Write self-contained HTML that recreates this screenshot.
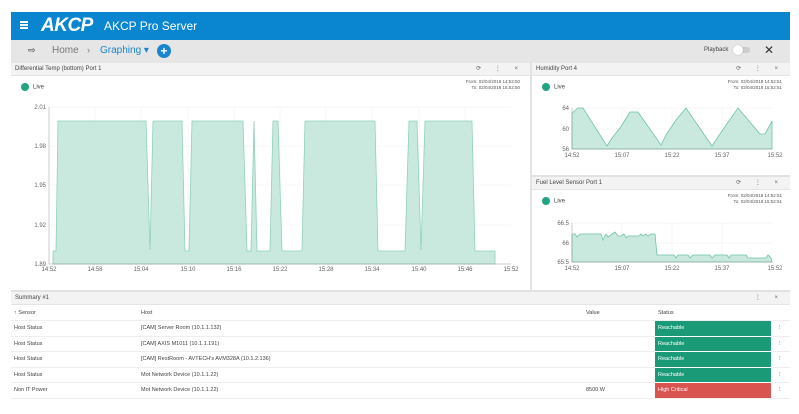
<!DOCTYPE html>
<html><head><meta charset="utf-8"><style>
*{box-sizing:border-box;margin:0;padding:0}
body{width:799px;height:414px;background:#fff;font-family:"Liberation Sans",sans-serif;position:relative;overflow:hidden;color:#333}
.abs{position:absolute}
.top{left:11px;top:12px;width:779px;height:28px;background:#0a86d0;color:#fff}
.tb{left:11px;top:40px;width:779px;height:23px;background:#e6e6e6}
.area{left:11px;top:63px;width:779px;height:345px;background:#e2e2e2}
.pan{position:absolute;background:#fff}
.ph{height:13px;background:#f3f3f3;border-bottom:1px solid #e4e4e4;font-size:6px;line-height:13px;padding-left:4px;color:#444;position:relative}
.ph .ic{position:absolute;right:6px;top:0;font-size:6px;color:#666;letter-spacing:6px}
.live{position:absolute;font-size:6px;color:#444}
.live i{display:inline-block;width:8px;height:8px;border-radius:50%;background:#1fa57f;vertical-align:middle;margin-right:4px}
.ft{position:absolute;font-size:4.5px;color:#555;text-align:right;line-height:6px}
svg text{font-family:"Liberation Sans",sans-serif;fill:#666}
table{border-collapse:collapse;width:100%;font-size:5.5px;color:#444}
td{height:15.5px;padding-left:3px;border-bottom:1px solid #eee}
.g{background:#1b9a78;color:#fff;border-bottom:1px solid #fff}
.r{background:#d9534f;color:#fff}
</style></head><body>
<div class="abs top">
 <div class="abs" style="left:9px;top:9px;width:8px;height:1.5px;background:#fff;box-shadow:0 3px 0 #fff,0 6px 0 #fff"></div>
 <div class="abs" style="left:30px;top:3px;font-size:19px;font-weight:bold;font-style:italic;letter-spacing:-0.5px">AKCP</div>
 <div class="abs" style="left:93px;top:7px;font-size:12px">AKCP Pro Server</div>
</div>
<div class="abs tb">
 <div class="abs" style="left:17px;top:5px;font-size:9px;color:#333">⇨</div>
 <div class="abs" style="left:41px;top:5px;font-size:10px;color:#777">Home</div>
 <div class="abs" style="left:76px;top:5px;font-size:9px;color:#777">›</div>
 <div class="abs" style="left:89px;top:5px;font-size:10px;color:#1a85cc">Graphing ▾</div>
 <div class="abs" style="left:146px;top:4px;width:14px;height:14px;border-radius:50%;background:#1a85cc;color:#fff;font-size:12px;line-height:14px;text-align:center;font-weight:bold">+</div>
 <div class="abs" style="left:693px;top:7px;font-size:6px;color:#444">Playback</div>
 <div class="abs" style="left:724px;top:7px;width:15px;height:6px;border-radius:3px;background:#ccc"></div>
 <div class="abs" style="left:722px;top:5px;width:10px;height:10px;border-radius:50%;background:#fff;box-shadow:0 0 1px #999"></div>
 <div class="abs" style="left:753px;top:3px;font-size:12px;color:#333">✕</div>
</div>
<div class="abs area">
 <div class="pan" style="left:0;top:0;width:519px;height:227px">
  <div class="ph">Differential Temp (bottom) Port 1<span class="ic">⟳ ⋮ ×</span></div>
  <div class="live" style="left:10px;top:20px"><i></i>Live</div>
  <div class="ft" style="right:10px;top:16px">From: 02/04/2018 14:52:50<br>To: 02/04/2018 15:52:50</div>
 </div>
 <div class="pan" style="left:521px;top:0;width:258px;height:112px">
  <div class="ph">Humidity Port 4<span class="ic">⟳ ⋮ ×</span></div>
  <div class="live" style="left:10px;top:20px"><i></i>Live</div>
  <div class="ft" style="right:8px;top:16px">From: 02/04/2018 14:52:51<br>To: 02/04/2018 15:52:51</div>
 </div>
 <div class="pan" style="left:521px;top:114px;width:258px;height:113px">
  <div class="ph">Fuel Level Sensor Port 1<span class="ic">⟳ ⋮ ×</span></div>
  <div class="live" style="left:10px;top:20px"><i></i>Live</div>
  <div class="ft" style="right:8px;top:16px">From: 02/04/2018 14:52:51<br>To: 02/04/2018 15:52:51</div>
 </div>
 <div class="pan" style="left:0;top:229px;width:779px;height:116px">
  <div class="ph">Summary #1<span class="ic">⋮ ×</span></div>
  <table>
   <tr style="background:#fff"><td style="width:127px;height:14px">↑ Sensor</td><td style="width:445px">Host</td><td style="width:72px">Value</td><td style="width:116px">Status</td><td style="padding-left:6px"></td></tr>
   <tr><td>Host Status</td><td>[CAM] Server Room (10.1.1.132)</td><td></td><td class="g">Reachable</td><td style="padding-left:6px">⋮</td></tr>
   <tr><td>Host Status</td><td>[CAM] AXIS M1011 (10.1.1.191)</td><td></td><td class="g">Reachable</td><td style="padding-left:6px">⋮</td></tr>
   <tr><td>Host Status</td><td>[CAM] RestRoom - AVTECH's AVM328A (10.1.2.136)</td><td></td><td class="g">Reachable</td><td style="padding-left:6px">⋮</td></tr>
   <tr><td>Host Status</td><td>Mot Network Device (10.1.1.22)</td><td></td><td class="g">Reachable</td><td style="padding-left:6px">⋮</td></tr>
   <tr><td>Non IT Power</td><td>Mot Network Device (10.1.1.22)</td><td>8500 W</td><td class="r">High Critical</td><td style="padding-left:6px">⋮</td></tr>
  </table>
 </div>
</div>
<svg class="abs" style="left:0;top:0" width="799" height="414">
 <g stroke="#eee" stroke-width="0.5">
  <line x1="49" y1="107" x2="511" y2="107"/><line x1="49" y1="146" x2="511" y2="146"/><line x1="49" y1="185" x2="511" y2="185"/><line x1="49" y1="225" x2="511" y2="225"/>
  <line x1="95" y1="107" x2="95" y2="264"/><line x1="141" y1="107" x2="141" y2="264"/><line x1="188" y1="107" x2="188" y2="264"/><line x1="234" y1="107" x2="234" y2="264"/><line x1="280" y1="107" x2="280" y2="264"/><line x1="326" y1="107" x2="326" y2="264"/><line x1="372" y1="107" x2="372" y2="264"/><line x1="419" y1="107" x2="419" y2="264"/><line x1="465" y1="107" x2="465" y2="264"/>
 </g>
 <path d="M53,264 L53,251 L56,251 L58,121 L146,121 L150,250 L153,121 L182,121 L185,251 L189,251 L192,121 L243,121 L247,251 L251,251 L254,121 L257,251 L270,251 L273,121 L278,121 L282,251 L302,251 L305,121 L375,121 L378,251 L405,251 L409,121 L417,121 L421,250 L425,121 L472,121 L475,251 L495,251 L495,264 Z" fill="#c9e9df" stroke="#8fd0bb" stroke-width="0.8"/>
 <line x1="49" y1="107" x2="49" y2="264" stroke="#999" stroke-width="0.5"/><line x1="49" y1="264" x2="511" y2="264" stroke="#999" stroke-width="0.5"/>
 <g font-size="6" text-anchor="end"><text x="46" y="109">2.01</text><text x="46" y="148">1.98</text><text x="46" y="187">1.95</text><text x="46" y="227">1.92</text><text x="46" y="266">1.89</text></g>
 <g font-size="6" text-anchor="middle"><text x="49" y="271">14:52</text><text x="95" y="271">14:58</text><text x="141" y="271">15:04</text><text x="188" y="271">15:10</text><text x="234" y="271">15:16</text><text x="280" y="271">15:22</text><text x="326" y="271">15:28</text><text x="372" y="271">15:34</text><text x="419" y="271">15:40</text><text x="465" y="271">15:46</text><text x="511" y="271">15:52</text></g>

 <g stroke="#eee" stroke-width="0.5"><line x1="572" y1="108" x2="772" y2="108"/><line x1="572" y1="129" x2="772" y2="129"/><line x1="622" y1="108" x2="622" y2="149"/><line x1="672" y1="108" x2="672" y2="149"/><line x1="722" y1="108" x2="722" y2="149"/></g>
 <path d="M572,149 L572,113 L578,108 L583,108 L607,146 L612,138 L620,128 L630,112 L638,112 L661,145 L666,135 L676,120 L686,108 L712,146 L724,128 L738,108 L760,134 L765,134 L772,121 L772,149 Z" fill="#c9e9df" stroke="#6fc1a6" stroke-width="0.8"/>
 <line x1="572" y1="108" x2="572" y2="149" stroke="#999" stroke-width="0.5"/><line x1="572" y1="149" x2="772" y2="149" stroke="#999" stroke-width="0.5"/>
 <g font-size="6" text-anchor="end"><text x="569" y="110">64</text><text x="569" y="131">60</text><text x="569" y="151">56</text></g>
 <g font-size="6" text-anchor="middle"><text x="572" y="157">14:52</text><text x="622" y="157">15:07</text><text x="672" y="157">15:22</text><text x="722" y="157">15:37</text><text x="775" y="157">15:52</text></g>

 <g stroke="#eee" stroke-width="0.5"><line x1="572" y1="223" x2="772" y2="223"/><line x1="572" y1="243" x2="772" y2="243"/><line x1="622" y1="223" x2="622" y2="262"/><line x1="672" y1="223" x2="672" y2="262"/><line x1="722" y1="223" x2="722" y2="262"/></g>
 <path d="M572,262 L572,234 L575,234 L577,237 L580,234 L601,234 L603,240 L606,234 L608,237 L615,232 L618,236 L621,236 L624,234 L626,238 L628,236 L639,236 L641,234 L643,236 L646,234 L648,236 L651,234 L655,234 L657,255 L674,255 L676,258 L678,255 L688,255 L690,258 L693,255 L710,255 L712,258 L715,255 L727,255 L729,258 L731,255 L746,255 L748,258 L766,258 L768,255 L771,258 L772,262 Z" fill="#c9e9df" stroke="#6fc1a6" stroke-width="0.8"/>
 <line x1="572" y1="223" x2="572" y2="262" stroke="#999" stroke-width="0.5"/><line x1="572" y1="262" x2="772" y2="262" stroke="#999" stroke-width="0.5"/>
 <g font-size="6" text-anchor="end"><text x="569" y="225">66.5</text><text x="569" y="245">66</text><text x="569" y="264">65.5</text></g>
 <g font-size="6" text-anchor="middle"><text x="572" y="270">14:52</text><text x="622" y="270">15:07</text><text x="672" y="270">15:22</text><text x="722" y="270">15:37</text><text x="775" y="270">15:52</text></g>
</svg>
</body></html>
